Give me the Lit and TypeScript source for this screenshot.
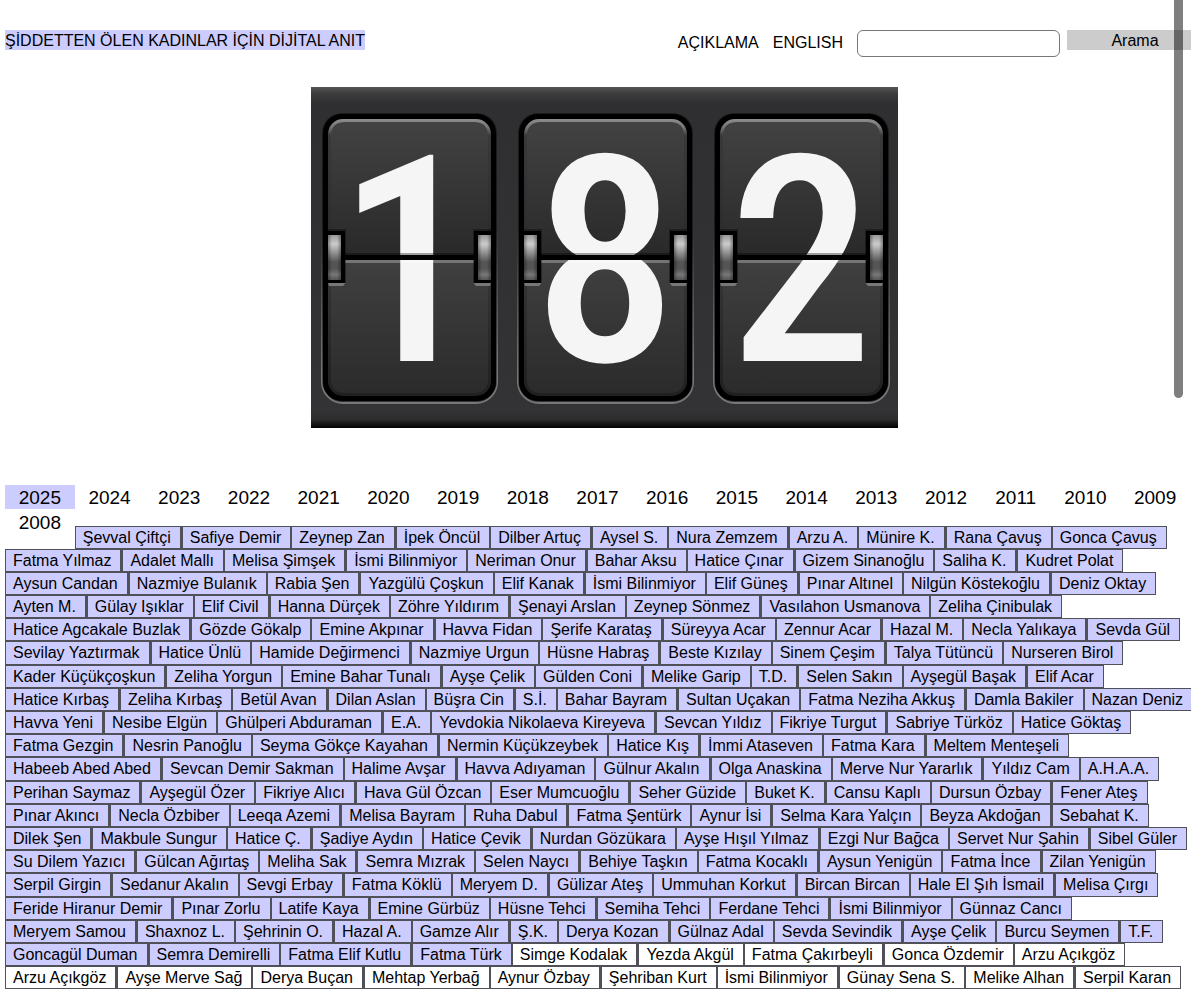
import { LitElement, html, svg, css } from "lit";
import { customElement } from "lit/decorators.js";
import { classMap } from "lit/directives/class-map.js";

const YEARS = Array.from({ length: 18 }, (_, i) => 2025 - i);

const FIRST_ROW = "Şevval Çiftçi|Safiye Demir|Zeynep Zan|İpek Öncül|Dilber Artuç|Aysel S.|Nura Zemzem|Arzu A.|Münire K.|Rana Çavuş|Gonca Çavuş";

// A leading asterisk marks an entry without the coloured background.
const ROWS = [
  "Fatma Yılmaz|Adalet Mallı|Melisa Şimşek|İsmi Bilinmiyor|Neriman Onur|Bahar Aksu|Hatice Çınar|Gizem Sinanoğlu|Saliha K.|Kudret Polat",
  "Aysun Candan|Nazmiye Bulanık|Rabia Şen|Yazgülü Çoşkun|Elif Kanak|İsmi Bilinmiyor|Elif Güneş|Pınar Altınel|Nilgün Köstekoğlu|Deniz Oktay",
  "Ayten M.|Gülay Işıklar|Elif Civil|Hanna Dürçek|Zöhre Yıldırım|Şenayi Arslan|Zeynep Sönmez|Vasılahon Usmanova|Zeliha Çinibulak",
  "Hatice Agcakale Buzlak|Gözde Gökalp|Emine Akpınar|Havva Fidan|Şerife Karataş|Süreyya Acar|Zennur Acar|Hazal M.|Necla Yalıkaya|Sevda Gül",
  "Sevilay Yaztırmak|Hatice Ünlü|Hamide Değirmenci|Nazmiye Urgun|Hüsne Habraş|Beste Kızılay|Sinem Çeşim|Talya Tütüncü|Nurseren Birol",
  "Kader Küçükçoşkun|Zeliha Yorgun|Emine Bahar Tunalı|Ayşe Çelik|Gülden Coni|Melike Garip|T.D.|Selen Sakın|Ayşegül Başak|Elif Acar",
  "Hatice Kırbaş|Zeliha Kırbaş|Betül Avan|Dilan Aslan|Büşra Cin|S.İ.|Bahar Bayram|Sultan Uçakan|Fatma Neziha Akkuş|Damla Bakiler|Nazan Deniz",
  "Havva Yeni|Nesibe Elgün|Ghülperi Abduraman|E.A.|Yevdokia Nikolaeva Kireyeva|Sevcan Yıldız|Fikriye Turgut|Sabriye Türköz|Hatice Göktaş",
  "Fatma Gezgin|Nesrin Panoğlu|Seyma Gökçe Kayahan|Nermin Küçükzeybek|Hatice Kış|İmmi Ataseven|Fatma Kara|Meltem Menteşeli",
  "Habeeb Abed Abed|Sevcan Demir Sakman|Halime Avşar|Havva Adıyaman|Gülnur Akalın|Olga Anaskina|Merve Nur Yararlık|Yıldız Cam|A.H.A.A.",
  "Perihan Saymaz|Ayşegül Özer|Fikriye Alıcı|Hava Gül Özcan|Eser Mumcuoğlu|Seher Güzide|Buket K.|Cansu Kaplı|Dursun Özbay|Fener Ateş",
  "Pınar Akıncı|Necla Özbiber|Leeqa Azemi|Melisa Bayram|Ruha Dabul|Fatma Şentürk|Aynur İsi|Selma Kara Yalçın|Beyza Akdoğan|Sebahat K.",
  "Dilek Şen|Makbule Sungur|Hatice Ç.|Şadiye Aydın|Hatice Çevik|Nurdan Gözükara|Ayşe Hışıl Yılmaz|Ezgi Nur Bağca|Servet Nur Şahin|Sibel Güler",
  "Su Dilem Yazıcı|Gülcan Ağırtaş|Meliha Sak|Semra Mızrak|Selen Naycı|Behiye Taşkın|Fatma Kocaklı|Aysun Yenigün|Fatma İnce|Zilan Yenigün",
  "Serpil Girgin|Sedanur Akalın|Sevgi Erbay|Fatma Köklü|Meryem D.|Gülizar Ateş|Ummuhan Korkut|Bircan Bircan|Hale El Şıh İsmail|Melisa Çırgı",
  "Feride Hiranur Demir|Pınar Zorlu|Latife Kaya|Emine Gürbüz|Hüsne Tehci|Semiha Tehci|Ferdane Tehci|İsmi Bilinmiyor|Günnaz Cancı",
  "Meryem Samou|Shaxnoz L.|Şehrinin O.|Hazal A.|Gamze Alır|Ş.K.|Derya Kozan|Gülnaz Adal|Sevda Sevindik|Ayşe Çelik|Burcu Seymen|T.F.",
  "Goncagül Duman|Semra Demirelli|Fatma Elif Kutlu|Fatma Türk|*Simge Kodalak|*Yezda Akgül|*Fatma Çakırbeyli|*Gonca Özdemir|*Arzu Açıkgöz",
  "*Arzu Açıkgöz|*Ayşe Merve Sağ|*Derya Buçan|*Mehtap Yerbağ|*Aynur Özbay|*Şehriban Kurt|*İsmi Bilinmiyor|*Günay Sena S.|*Melike Alhan|*Serpil Karan",
];

@customElement("flip-counter")
class FlipCounter extends LitElement {
  static styles = css`
    :host { display: block; }
    .board { display: block; width: 100%; height: auto; overflow: visible; }
    .digit {
      font-family: "Roboto Condensed", "Open Sans Condensed", "Liberation Sans Narrow", "Liberation Sans", sans-serif;
      font-weight: 500;
      font-size: 289px;
      fill: #f5f5f5;
      text-anchor: middle;
    }
  `;

  private hinge(x: number, left: boolean) {
    const inner = left ? x - 2 : x - 4;
    return svg`
      <rect x=${inner - 1} y="142" width="21" height="56" fill="#000" opacity=".35"/>
      <rect x=${inner} y="144" width="19" height="52" fill="#000"/>
      <rect x=${x} y="148" width="13" height="45" fill="url(#roller)"/>
      <rect x=${x} y="148" width="13" height="45" fill="url(#rollerShade)"/>
      <path d=${left ? `M${x} 196h18l-3 3h-14z` : `M${x + 13} 196h-18l3 3h14z`} fill="#777"/>`;
  }

  private card(x: number, digit: string) {
    return svg`
      <g transform="translate(${x} 0)">
        <rect x="-1" y="28" width="175" height="288" rx="21" fill="none" stroke="url(#rim)" stroke-width="2"/>
        <rect x="-1" y="26" width="175" height="288" rx="20" fill="#000" opacity=".4"/>
        <rect x="0" y="27" width="173" height="287" rx="19" fill="#000"/>
        <rect x="5" y="32" width="163" height="277" rx="15" fill="url(#edge)"/>
        <path d="M8 170V49Q8 35 22 35H151Q165 35 165 49V170Z" fill="url(#upper)"/>
        <path d="M8 172H165V292Q165 306 151 306H22Q8 306 8 292Z" fill="url(#lower)"/>
        <text class="digit" x="86" y="274">${digit}</text>
        <rect x="18" y="166" width="137" height="2" fill="#000" opacity=".35"/>
        <rect x="5" y="168" width="163" height="5" fill="#000"/>
        <rect x="20" y="173" width="133" height="3" fill="#fff" opacity=".28"/>
        ${this.hinge(5, true)}
        ${this.hinge(155, false)}
      </g>`;
  }

  render() {
    return html`
      <svg class="board" viewBox="0 0 587 341" role="img" aria-label="182">
        <defs>
          <linearGradient id="board" x2="0" y2="1">
            <stop offset="0" stop-color="#555"/><stop offset=".02" stop-color="#3c3c3d"/>
            <stop offset=".05" stop-color="#2f2f31"/><stop offset=".95" stop-color="#333335"/>
            <stop offset=".975" stop-color="#2c2c2d"/><stop offset="1" stop-color="#000"/>
          </linearGradient>
          <linearGradient id="rim" x2="0" y2="1">
            <stop offset=".4" stop-color="#777" stop-opacity="0"/><stop offset=".9" stop-color="#777"/>
          </linearGradient>
          <linearGradient id="edge" x2="0" y2="1">
            <stop offset="0" stop-color="#8c8c8c"/><stop offset=".03" stop-color="#777"/>
            <stop offset=".06" stop-color="#393939"/><stop offset=".49" stop-color="#292929"/>
            <stop offset=".5" stop-color="#383838"/><stop offset="1" stop-color="#202020"/>
          </linearGradient>
          <linearGradient id="upper" x2="0" y2="1">
            <stop offset="0" stop-color="#424242"/><stop offset="1" stop-color="#292929"/>
          </linearGradient>
          <linearGradient id="lower" x2="0" y2="1">
            <stop offset="0" stop-color="#404040"/><stop offset="1" stop-color="#2b2b2b"/>
          </linearGradient>
          <linearGradient id="roller" x2="0" y2="1">
            <stop offset="0" stop-color="#999"/><stop offset=".2" stop-color="#ccc"/>
            <stop offset=".6" stop-color="#555"/><stop offset=".75" stop-color="#555"/>
            <stop offset=".88" stop-color="#777"/><stop offset="1" stop-color="#555"/>
          </linearGradient>
          <linearGradient id="rollerShade">
            <stop offset="0" stop-opacity=".35"/><stop offset=".3" stop-opacity="0"/>
            <stop offset=".7" stop-opacity="0"/><stop offset="1" stop-opacity=".35"/>
          </linearGradient>
        </defs>
        <rect width="587" height="341" fill="url(#board)"/>
        ${this.card(12, "1")}${this.card(208, "8")}${this.card(404, "2")}
      </svg>`;
  }
}

@customElement("app-root")
class AppRoot extends LitElement {
  static styles = css`
    :host {
      display: block;
      position: relative;
      overflow: hidden;
      background: #fff;
      color: #000;
      font: 16px/20px "Liberation Sans", Arial, sans-serif;
    }
    a { color: inherit; text-decoration: none; }
    .header { display: flex; align-items: flex-start; padding: 30px 0 0 5px; }
    .title {
      margin: 0 auto 0 0; padding-top: 2px; font-size: 16px; line-height: 18px;
      font-weight: 400; background: #ccf; white-space: nowrap;
    }
    .links { display: flex; gap: 14px; padding: 3px 14px 0 0; }
    .search { display: flex; align-items: flex-start; gap: 7px; }
    .field {
      box-sizing: border-box; width: 203px; height: 27px; margin: 0; padding: 0 6px;
      border: 1px solid #777; border-radius: 6px; background: #fff; font: inherit;
    }
    .submit {
      box-sizing: border-box; width: 124px; height: 20px; margin: 0; padding: 2px 0 0 12px;
      border: 0; background: #ccc; color: #000; font: inherit; line-height: 18px;
    }
    .counter { width: 587px; max-width: 100%; margin: 30px auto 57px; padding-left: 18px; }
    .board { display: grid; grid-template-columns: repeat(17, 1fr); row-gap: 1px; margin: 0 1px 0 5px; }
    .year { height: 24px; font-size: 19px; line-height: 25px; text-align: center; }
    .current { background: #ccf; }
    .lead { grid-column: 2 / -1; padding-top: 16px; }
    .names { margin-left: 5px; }
    .row { display: flex; white-space: nowrap; }
    .name {
      box-sizing: border-box; flex: none; height: 23px; padding: 0 9px 0 7px;
      border: 1px solid #505058; line-height: 22px; background: #ccf;
    }
    .name:nth-child(even) { border-left-width: 2px; }
    .row:nth-child(5n) .name { height: 24px; }
    .plain { background: #fff; }
    .thumb {
      position: absolute; top: 0; right: 8px; width: 9px; height: 398px;
      border-radius: 0 0 5px 5px; background: rgba(0, 0, 0, 0.5);
    }
  `;

  private row(names: string) {
    return html`<div class="row">${names.split("|").map((n) => {
      const plain = n.startsWith("*");
      return html`<a href="#" class=${classMap({ name: true, plain })}>${plain ? n.slice(1) : n}</a>`;
    })}</div>`;
  }

  render() {
    return html`
      <header class="header">
        <h1 class="title">ŞİDDETTEN ÖLEN KADINLAR İÇİN DİJİTAL ANIT</h1>
        <nav class="links"><a href="#">AÇIKLAMA</a><a href="#">ENGLISH</a></nav>
        <form class="search" @submit=${(e: Event) => e.preventDefault()}>
          <input class="field" type="text" aria-label="Arama">
          <button class="submit" type="submit">Arama</button>
        </form>
      </header>
      <main>
        <flip-counter class="counter"></flip-counter>
        <div class="board">
          ${YEARS.map((y) => html`<a href="#" class=${classMap({ year: true, current: y === 2025 })}>${y}</a>`)}
          <div class="lead">${this.row(FIRST_ROW)}</div>
        </div>
        <div class="names">${ROWS.map((r) => this.row(r))}</div>
      </main>
      <div class="thumb"></div>`;
  }
}
